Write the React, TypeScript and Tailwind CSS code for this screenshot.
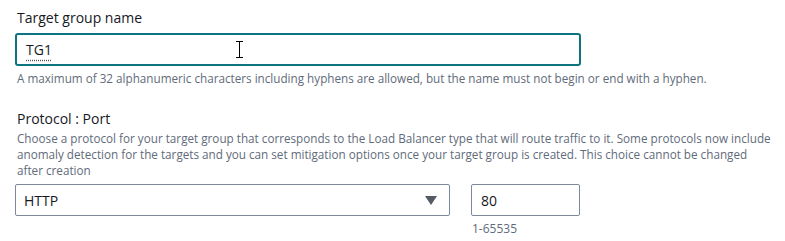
export default function App() {
    return (
        <div className="w-[785px] h-[241px] bg-white font-['Open_Sans',sans-serif] text-[#16191f] overflow-hidden">
            <div className="pl-[15px] pt-[8px]">
                {/* Target group name */}
                <div className="text-[14px] leading-[20px] pl-[2px]">Target group name</div>
                <div className="mt-[5px] relative w-[566px] h-[33px] border-2 border-[#0f7481] rounded-[3px] flex items-center pl-[9px]">
                    <span className="text-[14px] underline decoration-dotted decoration-[#555] underline-offset-[5px]">TG1</span>
                    {/* text cursor */}
                    <div className="absolute left-[219px] top-[6px] w-[7px] h-[17px] flex flex-col items-center">
                        <div className="w-[7px] h-[1px] bg-black" />
                        <div className="w-[1px] flex-1 bg-black" />
                        <div className="w-[7px] h-[1px] bg-black" />
                    </div>
                </div>
                <div className="mt-[4px] pl-[2px] text-[11.7px] leading-[16px] text-[#5f6b7a] whitespace-nowrap">
                    A maximum of 32 alphanumeric characters including hyphens are allowed, but the name must not begin or end with a hyphen.
                </div>

                {/* Protocol : Port */}
                <div className="mt-[23px] pl-[2px] text-[14px] leading-[20px]">Protocol : Port</div>
                <div className="mt-[1px] pl-[2px] text-[11.7px] leading-[16px] text-[#5f6b7a] whitespace-nowrap">
                    Choose a protocol for your target group that corresponds to the Load Balancer type that will route traffic to it. Some protocols now include<br />
                    anomaly detection for the targets and you can set mitigation options once your target group is created. This choice cannot be changed<br />
                    after creation
                </div>
                <div className="mt-[6px] flex gap-[21px]">
                    <div className="w-[435px] h-[32px] border border-[#7d8998] rounded-[2px] flex items-center justify-between pl-[8px] pr-[12px]">
                        <span className="text-[14px]">HTTP</span>
                        <svg width="12" height="9" viewBox="0 0 12 9">
                            <path d="M0 0 L12 0 L6 9 Z" fill="#545b64" />
                        </svg>
                    </div>
                    <div>
                        <div className="w-[109px] h-[32px] border border-[#7d8998] rounded-[2px] flex items-center pl-[9px]">
                            <span className="text-[14px]">80</span>
                        </div>
                        <div className="mt-[5px] pl-[1px] text-[12px] leading-[16px] text-[#5f6b7a]">1-65535</div>
                    </div>
                </div>
            </div>
        </div>
    )
}
